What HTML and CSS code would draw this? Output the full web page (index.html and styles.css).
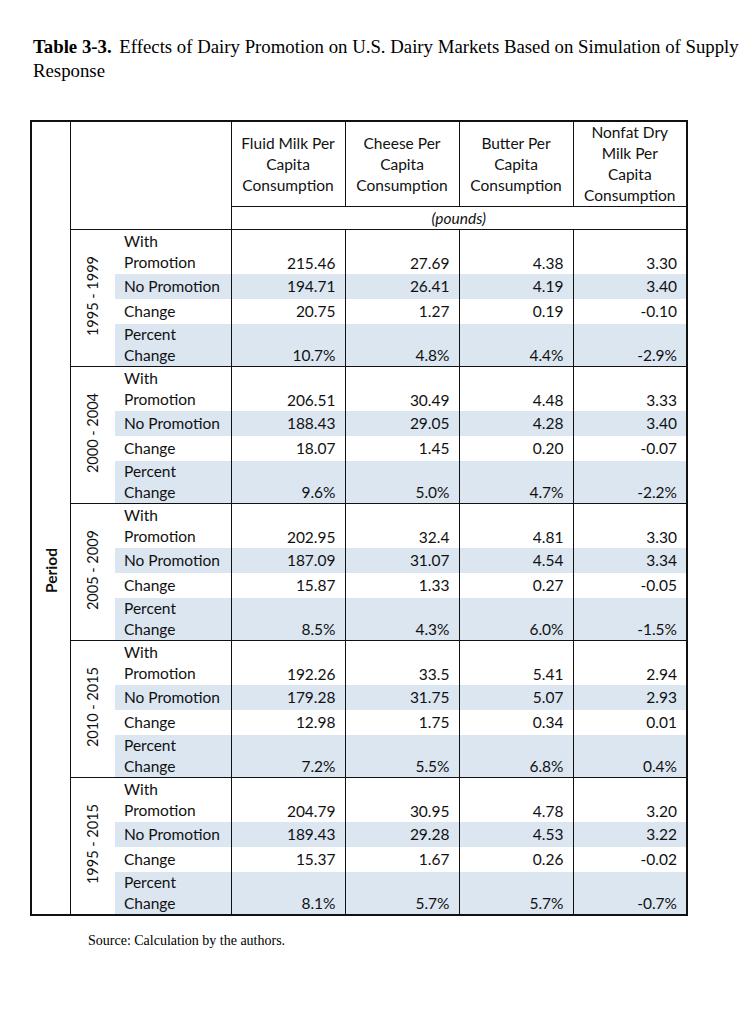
FILE: index.html
```html
<!DOCTYPE html>
<html>
<head>
<meta charset="utf-8">
<link rel="stylesheet" href="styles.css">
</head>
<body>
<div class="page">
  <p class="title"><b class="tnum">Table 3-3.</b> <span>Effects of Dairy Promotion on U.S. Dairy Markets Based on Simulation of Supply Response</span></p>
  <table class="tbl">
    <colgroup>
      <col class="c-period"><col class="c-year"><col class="c-label">
      <col class="c-num"><col class="c-num"><col class="c-num"><col class="c-num">
    </colgroup>
    <thead>
      <tr class="r-head">
        <th class="blank-period" rowspan="2"></th>
        <th class="blank-corner" colspan="2" rowspan="2"></th>
        <th class="hd">Fluid Milk Per<br>Capita<br>Consumption</th>
        <th class="hd">Cheese Per<br>Capita<br>Consumption</th>
        <th class="hd">Butter Per<br>Capita<br>Consumption</th>
        <th class="hd">Nonfat Dry<br>Milk Per<br>Capita<br>Consumption</th>
      </tr>
      <tr class="r-units">
        <th class="units" colspan="4">(pounds)</th>
      </tr>
    </thead>
    <tbody>
      <tr class="r-with g-start">
        <td class="period" rowspan="20"><span class="vt bold">Period</span></td>
        <td class="year" rowspan="4"><span class="vt">1995 - 1999</span></td>
        <td class="lbl">With<br>Promotion</td><td class="n">215.46</td><td class="n">27.69</td><td class="n">4.38</td><td class="n">3.30</td>
      </tr>
      <tr class="r-one shade"><td class="lbl">No Promotion</td><td class="n">194.71</td><td class="n">26.41</td><td class="n">4.19</td><td class="n">3.40</td></tr>
      <tr class="r-one"><td class="lbl">Change</td><td class="n">20.75</td><td class="n">1.27</td><td class="n">0.19</td><td class="n">-0.10</td></tr>
      <tr class="r-pct shade"><td class="lbl">Percent<br>Change</td><td class="n">10.7%</td><td class="n">4.8%</td><td class="n">4.4%</td><td class="n">-2.9%</td></tr>

      <tr class="r-with g-start">
        <td class="year" rowspan="4"><span class="vt">2000 - 2004</span></td>
        <td class="lbl">With<br>Promotion</td><td class="n">206.51</td><td class="n">30.49</td><td class="n">4.48</td><td class="n">3.33</td>
      </tr>
      <tr class="r-one shade"><td class="lbl">No Promotion</td><td class="n">188.43</td><td class="n">29.05</td><td class="n">4.28</td><td class="n">3.40</td></tr>
      <tr class="r-one"><td class="lbl">Change</td><td class="n">18.07</td><td class="n">1.45</td><td class="n">0.20</td><td class="n">-0.07</td></tr>
      <tr class="r-pct shade"><td class="lbl">Percent<br>Change</td><td class="n">9.6%</td><td class="n">5.0%</td><td class="n">4.7%</td><td class="n">-2.2%</td></tr>

      <tr class="r-with g-start">
        <td class="year" rowspan="4"><span class="vt">2005 - 2009</span></td>
        <td class="lbl">With<br>Promotion</td><td class="n">202.95</td><td class="n">32.4</td><td class="n">4.81</td><td class="n">3.30</td>
      </tr>
      <tr class="r-one shade"><td class="lbl">No Promotion</td><td class="n">187.09</td><td class="n">31.07</td><td class="n">4.54</td><td class="n">3.34</td></tr>
      <tr class="r-one"><td class="lbl">Change</td><td class="n">15.87</td><td class="n">1.33</td><td class="n">0.27</td><td class="n">-0.05</td></tr>
      <tr class="r-pct shade"><td class="lbl">Percent<br>Change</td><td class="n">8.5%</td><td class="n">4.3%</td><td class="n">6.0%</td><td class="n">-1.5%</td></tr>

      <tr class="r-with g-start">
        <td class="year" rowspan="4"><span class="vt">2010 - 2015</span></td>
        <td class="lbl">With<br>Promotion</td><td class="n">192.26</td><td class="n">33.5</td><td class="n">5.41</td><td class="n">2.94</td>
      </tr>
      <tr class="r-one shade"><td class="lbl">No Promotion</td><td class="n">179.28</td><td class="n">31.75</td><td class="n">5.07</td><td class="n">2.93</td></tr>
      <tr class="r-one"><td class="lbl">Change</td><td class="n">12.98</td><td class="n">1.75</td><td class="n">0.34</td><td class="n">0.01</td></tr>
      <tr class="r-pct shade"><td class="lbl">Percent<br>Change</td><td class="n">7.2%</td><td class="n">5.5%</td><td class="n">6.8%</td><td class="n">0.4%</td></tr>

      <tr class="r-with g-start">
        <td class="year" rowspan="4"><span class="vt">1995 - 2015</span></td>
        <td class="lbl">With<br>Promotion</td><td class="n">204.79</td><td class="n">30.95</td><td class="n">4.78</td><td class="n">3.20</td>
      </tr>
      <tr class="r-one shade"><td class="lbl">No Promotion</td><td class="n">189.43</td><td class="n">29.28</td><td class="n">4.53</td><td class="n">3.22</td></tr>
      <tr class="r-one"><td class="lbl">Change</td><td class="n">15.37</td><td class="n">1.67</td><td class="n">0.26</td><td class="n">-0.02</td></tr>
      <tr class="r-pct shade last"><td class="lbl">Percent<br>Change</td><td class="n">8.1%</td><td class="n">5.7%</td><td class="n">5.7%</td><td class="n">-0.7%</td></tr>
    </tbody>
  </table>
  <p class="source">Source: Calculation by the authors.</p>
</div>
</body>
</html>
```

FILE: styles.css
```css
html, body {
  margin: 0;
  padding: 0;
  background: #ffffff;
}
th, td {
  padding: 0;
  border: none;
}
.page {
  padding: 35px 0 0 33px;
}
.title {
  margin: 0;
  width: 714px;
  font-family: "Liberation Serif", "Times New Roman", serif;
  font-size: 18.8px;
  line-height: 24px;
  color: #000;
}
.tnum {
  margin-right: 3px;
}
.tbl {
  margin-top: 37px;
  margin-left: -3px;
  border-collapse: collapse;
  table-layout: fixed;
  width: 657px;
  font-family: Lato, "Open Sans", sans-serif;
  font-size: 15.5px;
  color: #111;
  border: 2px solid #111;
}
.c-period { width: 39px; }
.c-year { width: 45px; }
.c-label { width: 116px; }
.c-num { width: 114px; }

.r-head { height: 85px; }
.r-units { height: 23px; }
.blank-period {
  border-right: 1.5px solid #111;
}
.blank-corner {
  border-right: 1.5px solid #111;
  border-bottom: 1.5px solid #111;
}
.hd {
  font-weight: normal;
  line-height: 21px;
  text-align: center;
  vertical-align: middle;
  border-right: 1.5px solid #111;
  border-bottom: 1.5px solid #111;
}
.units {
  font-weight: normal;
  font-style: italic;
  text-align: center;
  vertical-align: middle;
  border-bottom: 1.5px solid #111;
}
.period {
  border-right: 1.5px solid #111;
  text-align: center;
  vertical-align: middle;
}
.year {
  text-align: center;
  vertical-align: middle;
  font-size: 14.5px;
}
.vt {
  display: inline-block;
  writing-mode: vertical-rl;
  transform: rotate(180deg);
  white-space: nowrap;
}
.bold { font-weight: bold; }

.r-with { height: 44px; }
.r-one { height: 25px; }
.r-pct { height: 43px; }
.g-start > td {
  border-top: 1.5px solid #111;
}
.g-start > td.period {
  border-top: none;
}
.lbl {
  padding-left: 9px;
  line-height: 21px;
  vertical-align: middle;
  border-right: 1.5px solid #111;
}
.n {
  text-align: right;
  padding-right: 9px;
  line-height: 21px;
  vertical-align: bottom;
  border-right: 1.5px solid #111;
}
.r-one > .n { vertical-align: middle; }
.shade > .lbl, .shade > .n {
  background: #dce6f1;
}
.last > td {
  border-bottom: 2px solid #111;
}
.source {
  margin: 16px 0 0 55px;
  font-family: "Liberation Serif", "Times New Roman", serif;
  font-size: 14px;
  line-height: 18px;
  color: #000;
}
```
